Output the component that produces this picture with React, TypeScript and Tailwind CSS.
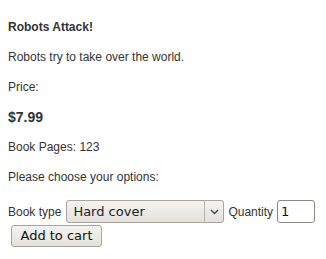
import React from 'react';

const App = () => {
  return (
    <div className="w-[326px] h-[259px] bg-white px-2 pt-5 text-[12px] leading-[14px] text-[#333] font-['Liberation_Sans',Arial,sans-serif]">
      <h2 className="font-bold">Robots Attack!</h2>
      <p className="mt-4">Robots try to take over the world.</p>
      <p className="mt-4">Price:</p>
      <p className="mt-4 text-[14px] font-bold">$7.99</p>
      <p className="mt-4">Book Pages: 123</p>
      <p className="mt-4">Please choose your options:</p>
      <div className="mt-4 flex items-center">
        <span>Book type</span>
        <div className="relative ml-[5px]">
          <select
            defaultValue="hard"
            className="block appearance-none w-[158px] h-[23px] rounded-[3px] border border-[#a8a49c] bg-gradient-to-b from-[#f4f3f1] to-[#e4e1dc] pl-[6px] text-[13px] text-[#222] font-['DejaVu_Sans',sans-serif]"
          >
            <option value="hard">Hard cover</option>
            <option value="soft">Soft cover</option>
          </select>
          <div className="pointer-events-none absolute right-0 top-0 flex h-[23px] w-[20px] items-center justify-center border-l border-[#b5b1aa]">
            <svg width="9" height="6" viewBox="0 0 9 6" fill="none">
              <path d="M1 1l3.5 3.5L8 1" stroke="#444" strokeWidth="1.3" />
            </svg>
          </div>
        </div>
        <span className="ml-[4px]">Quantity</span>
        <input
          defaultValue="1"
          className="ml-[4px] w-[38px] h-[23px] rounded-[3px] border border-[#8c8882] bg-white px-[3px] text-[13px] text-[#111] font-['DejaVu_Sans',sans-serif]"
        />
      </div>
      <button className="mt-[2px] ml-[3px] h-[22px] w-[91px] rounded-[3px] border border-[#a8a49c] bg-gradient-to-b from-[#f4f3f1] to-[#e4e1dc] text-[13px] text-[#111] font-['DejaVu_Sans',sans-serif]">
        Add to cart
      </button>
    </div>
  );
};

export default App;
